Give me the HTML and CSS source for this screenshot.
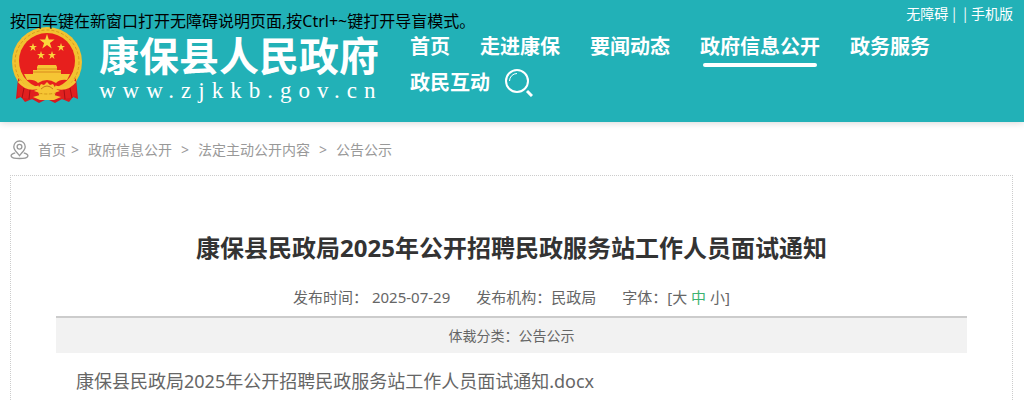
FILE: index.html
```html
<!DOCTYPE html>
<html lang="zh-CN">
<head>
    <meta charset="UTF-8">
    <meta name="viewport" content="width=device-width, initial-scale=1.0">
    <title>康保县民政局2025年公开招聘民政服务站工作人员面试通知</title>
    <link rel="stylesheet" href="styles.css">
</head>
<body>
    <header class="header">
        <p class="guide-tip">按回车键在新窗口打开无障碍说明页面,按Ctrl+~键打开导盲模式。</p>
        <div class="container header-inner">
            <a class="logo" href="#">
                <svg class="emblem" width="74" height="78" viewBox="0 0 74 78" aria-hidden="true">
                    <path d="M8 52 L6 73 L11 71 L15 76 L22 73 L29 77 L37 73 L45 77 L52 73 L59 76 L63 71 L68 73 L66 52 Z" fill="#d7191f"/>
                    <circle cx="37" cy="36" r="35" fill="#f2c230"/>
                    <circle cx="37" cy="36" r="32" fill="none" stroke="#d99a1c" stroke-width="1" stroke-dasharray="3 2"/>
                    <circle cx="37" cy="35" r="28" fill="#e71f1d"/>
                    <path d="M37 8 L38.800 13.500 H44.600 L39.900 16.900 L41.700 22.400 L37 19 L32.300 22.400 L34.100 16.900 L29.400 13.500 H35.200 Z" fill="#fbd63c"/>
                    <path id="star" d="M23 17 L24 20 H27 L24.500 21.800 L25.500 25 L23 23 L20.500 25 L21.500 21.800 L19 20 H22 Z" fill="#fbd63c"/>
                    <use href="#star" x="28"/>
                    <use href="#star" x="8" y="8"/>
                    <use href="#star" x="19" y="8"/>
                    <path d="M27 41 L28 39 H46 L47 41 V44 H51 V48 H23 V44 H27 Z" fill="#f6c534"/>
                    <path d="M27 43 H47 M23 46 H51" stroke="#d98a1c" stroke-width="1"/>
                    <path d="M14 48 H60 L57 54 Q50 53 46 57 Q37 51 28 57 Q24 53 17 54 Z" fill="#f6c534"/>
                    <path d="M8 52 Q14 63 27 62 L30 72 Q18 75 8 70 Z M66 52 Q60 63 47 62 L44 72 Q56 75 66 70 Z" fill="#e0201f"/>
                    <path d="M9 55 Q17 65 29 61 M65 55 Q57 65 45 61" stroke="#f6c534" stroke-width="3" fill="none"/>
                    <path d="M14 62 L12 72 M20 64 L19 73 M60 62 L62 72 M54 64 L55 73" stroke="#a80f14" stroke-width="1"/>
                    <path d="M28 63 L31 58 L34 59 L37 56 L40 59 L43 58 L46 63 L50 65 L44 67 H30 L24 65 Z" fill="#f6c534"/>
                    <path d="M31 63 Q37 57 43 63" fill="none" stroke="#c9781a" stroke-width="1"/>
                    <path d="M23 71 L30 69 H44 L51 71 L44 74 H30 Z" fill="#f6c534"/>
                </svg>
                <span class="logo-text">
                    <span class="logo-name">康保县人民政府</span>
                    <span class="logo-domain">www.zjkkb.gov.cn</span>
                </span>
            </a>
            <div class="header-right">
                <div class="top-links">
                    <a href="#">无障碍</a>
                    <span>|&nbsp;</span>
                    <span>|</span>
                    <a href="#">手机版</a>
                </div>
                <nav class="nav">
                    <a href="#">首页</a>
                    <a href="#">走进康保</a>
                    <a href="#">要闻动态</a>
                    <a class="active" href="#">政府信息公开</a>
                    <a href="#">政务服务</a>
                    <a href="#">政民互动</a>
                    <button class="search-btn" type="button" aria-label="搜索">
                        <svg width="28" height="28" viewBox="0 0 28 28" fill="none" stroke="#fff">
                            <circle cx="12" cy="12" r="11" stroke-width="2"/>
                            <path d="M4.500 12 A7.500 7.500 0 0 1 12 4.500" stroke-width="1"/>
                            <path d="M22 22 L27 27" stroke-width="3"/>
                        </svg>
                    </button>
                </nav>
            </div>
        </div>
    </header>

    <div class="container">
        <div class="breadcrumb">
            <svg width="19" height="20" viewBox="0 0 20 20" fill="none" stroke="#999" stroke-width="1.400" aria-hidden="true">
                <path d="M10 16 C7 12 4 10 4 6.500 A6 6 0 0 1 16 6.500 C16 10 13 12 10 16 Z"/>
                <circle cx="10" cy="6.500" r="2.500"/>
                <path d="M5.500 13 C2 14 0.500 15.500 1.500 17 C3 19.600 17 19.600 18.500 17 C19.500 15.500 18 14 14.500 13"/>
            </svg>
            <a class="home" href="#">首页</a>
            <span>&gt;</span>
            <a href="#">政府信息公开</a>
            <span>&gt;</span>
            <a href="#">法定主动公开内容</a>
            <span>&gt;</span>
            <a href="#">公告公示</a>
        </div>

        <main class="article">
            <h1>康保县民政局2025年公开招聘民政服务站工作人员面试通知</h1>
            <div class="meta">
                <span>发布时间： 2025-07-29</span>
                <span>发布机构：民政局</span>
                <span>字体：[<a href="#">大</a> <a class="on" href="#">中</a> <a href="#">小</a>]</span>
            </div>
            <div class="category">体裁分类：公告公示</div>
            <div class="content">
                <a href="#">康保县民政局2025年公开招聘民政服务站工作人员面试通知.docx</a>
            </div>
        </main>
    </div>
</body>
</html>
```
FILE: styles.css
```css
* {
    margin: 0;
    padding: 0;
    box-sizing: border-box;
}
body {
    font-family: "Noto Sans", "Noto Sans CJK SC", sans-serif;
    font-size: 14px;
    color: #666;
    background: #fff;
}
a {
    color: inherit;
    text-decoration: none;
}
.container {
    margin: 0 11px 0 10px;
}

/* header */
.header {
    position: relative;
    background: #22b1b7;
    box-shadow: 0 0 8px rgba(0, 0, 0, 0.2);
}
.guide-tip {
    position: absolute;
    left: 10px;
    top: 9px;
    font-size: 16px;
    line-height: 24px;
    color: #000;
}
.header-inner {
    display: flex;
    min-height: 122px;
}
.logo {
    display: flex;
    flex: none;
    align-items: flex-start;
    width: 385px;
    padding-top: 26px;
    color: #fff;
}
.emblem {
    flex: none;
}
.logo-text {
    display: flex;
    flex-direction: column;
    padding: 8px 0 0 15px;
}
.logo-name {
    font-size: 40px;
    font-weight: bold;
    line-height: 44px;
}
.logo-domain {
    font-family: "Liberation Serif", serif;
    font-size: 23px;
    line-height: 26px;
    letter-spacing: 7px;
}
.header-right {
    flex: 1;
    min-width: 0;
}
.top-links {
    display: flex;
    justify-content: flex-end;
    gap: 4px;
    padding-top: 3px;
    font-family: "Noto Sans CJK SC", sans-serif;
    line-height: 20px;
    color: #fff;
}
.nav {
    display: flex;
    flex-wrap: wrap;
    padding-top: 6px;
}
.nav a {
    position: relative;
    padding: 0 15px;
    font-size: 20px;
    font-weight: bold;
    line-height: 36px;
    color: #fff;
}
.nav .active::after {
    content: "";
    position: absolute;
    left: 18px;
    right: 18px;
    bottom: -2px;
    height: 4px;
    border-radius: 2px;
    background: #fff;
}
.search-btn {
    height: 36px;
    border: none;
    background: none;
    cursor: pointer;
}
.search-btn svg {
    display: block;
}

/* breadcrumb */
.breadcrumb {
    display: flex;
    align-items: center;
    gap: 9px;
    padding: 18px 0 15px;
    line-height: 20px;
    color: #999;
}
.breadcrumb .home {
    margin-right: -4px;
}

/* article */
.article {
    padding: 50px 45px 20px;
    border: 1px dotted #ccc;
}
.article h1 {
    font-size: 24px;
    line-height: 44px;
    text-align: center;
    color: #333;
}
.meta {
    display: flex;
    justify-content: center;
    gap: 26px;
    padding: 12px 0 4px;
    font-size: 15px;
    line-height: 30px;
}
.meta .on {
    color: #3cb371;
}
.category {
    border-top: 2px solid #ccc;
    background: #f2f2f2;
    line-height: 35px;
    text-align: center;
}
.content {
    padding: 13px 20px;
    font-size: 18px;
    line-height: 30px;
}
```
